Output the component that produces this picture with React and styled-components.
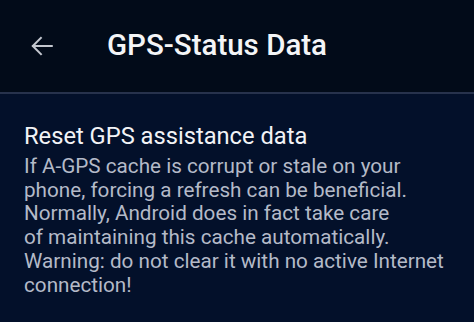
import styled, {createGlobalStyle} from "styled-components";

const GlobalStyle = createGlobalStyle`
   html, body {
      margin: 0;
      padding: 0;
      background: #03102a;
   }
   body {
      font-family: Roboto, "Liberation Sans", sans-serif;
   }
`;

const Screen = styled.div`
   width: 474px;
   height: 322px;
   display: flex;
   flex-direction: column;
   background-color: #03102a;
   overflow: hidden;
`;

const Toolbar = styled.header`
   height: 94px;
   display: flex;
   align-items: center;
   background-color: #020b19;
   border-bottom: 2px solid #27324c;
   box-sizing: border-box;
   flex-shrink: 0;
`;

const BackButton = styled.button`
   width: 107px;
   height: 100%;
   display: flex;
   align-items: center;
   padding: 0 0 0 29px;
   margin: 0;
   border: none;
   background: none;
   color: #c3c7cf;
   cursor: pointer;
   box-sizing: border-box;
`;

const Title = styled.h1`
   margin: 0;
   font-size: 29.5px;
   font-weight: 500;
   color: #f4f5f7;
   padding-bottom: 2px;
`;

const Content = styled.section`
   padding: 28px 24px 0 24px;
`;

const ItemTitle = styled.h2`
   margin: 0;
   font-size: 23.7px;
   font-weight: 400;
   color: #f2f3f6;
   line-height: 28px;
`;

const ItemText = styled.p`
   margin: 5px 0 0 0;
   font-size: 20.7px;
   line-height: 23.7px;
   color: #b4bac8;
`;

const ArrowIcon = () => (
    <svg width="26" height="26" viewBox="0 0 24 24" fill="none" stroke="currentColor" strokeWidth="1.9" strokeLinecap="square">
        <path d="M21 12H4" />
        <path d="M11 4.5L3.5 12L11 19.5" />
    </svg>
);

const App = () => {
    return (
        <Screen>
            <GlobalStyle />
            <Toolbar>
                <BackButton aria-label="Back">
                    <ArrowIcon />
                </BackButton>
                <Title>GPS-Status Data</Title>
            </Toolbar>
            <Content>
                <ItemTitle>Reset GPS assistance data</ItemTitle>
                <ItemText>
                    If A-GPS cache is corrupt or stale on your<br />
                    phone, forcing a refresh can be beneficial.<br />
                    Normally, Android does in fact take care<br />
                    of maintaining this cache automatically.<br />
                    Warning: do not clear it with no active Internet<br />
                    connection!
                </ItemText>
            </Content>
        </Screen>
    );
};

export default App;
